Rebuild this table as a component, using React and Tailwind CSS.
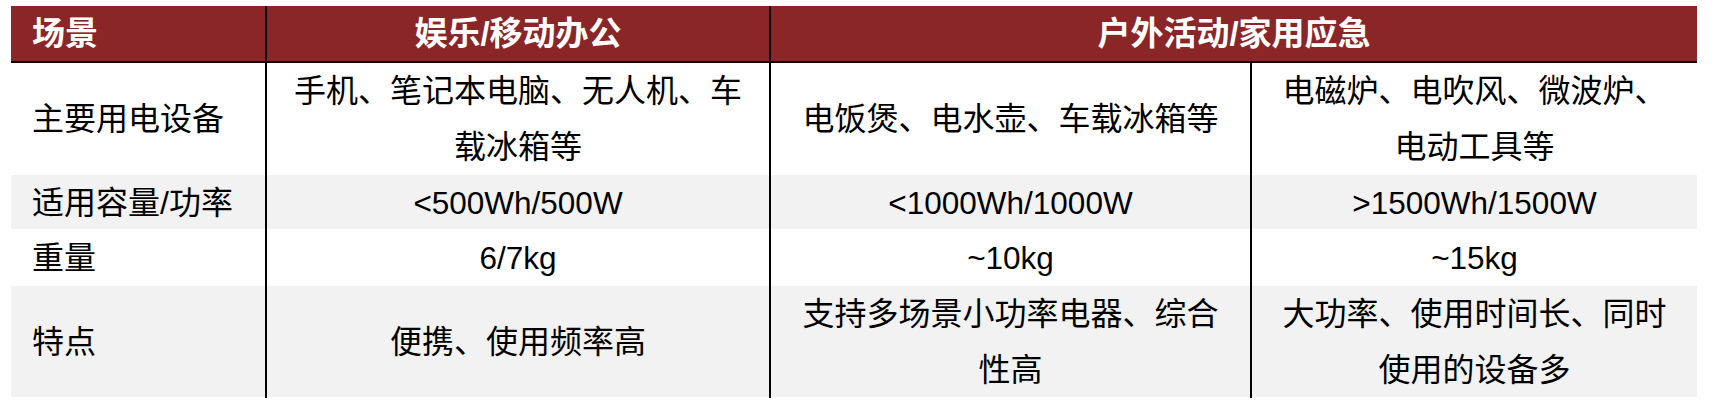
import React from "react";

const cjk = { fontFamily: '"Liberation Sans", "Noto Sans CJK SC", sans-serif' };

const rows = [
  {
    h: "h-[112px]",
    bg: "bg-white",
    latin: false,
    label: "主要用电设备",
    cells: [["手机、笔记本电脑、无人机、车", "载冰箱等"], ["电饭煲、电水壶、车载冰箱等"], ["电磁炉、电吹风、微波炉、", "电动工具等"]],
  },
  {
    h: "h-[54px]",
    bg: "bg-[#f2f2f2]",
    latin: true,
    label: "适用容量/功率",
    cells: [["<500Wh/500W"], ["<1000Wh/1000W"], [">1500Wh/1500W"]],
  },
  {
    h: "h-[57px]",
    bg: "bg-white",
    latin: true,
    label: "重量",
    cells: [["6/7kg"], ["~10kg"], ["~15kg"]],
  },
  {
    h: "h-[111px]",
    bg: "bg-[#f2f2f2]",
    latin: false,
    label: "特点",
    cells: [["便携、使用频率高"], ["支持多场景小功率电器、综合", "性高"], ["大功率、使用时间长、同时", "使用的设备多"]],
  },
];

export default function App() {
  return (
    <div className="w-[1715px] h-[414px] bg-white overflow-hidden" style={cjk}>
      <div className="ml-[11px] mt-[6px] w-[1686px] text-[32px] text-black">
        <div className="grid grid-cols-[254px_504px_928px] h-[57px] bg-[#8a2628] border-b-2 border-black text-white font-bold text-[33px]">
          <div className="flex items-center pl-[21px]">场景</div>
          <div className="flex items-center justify-center border-l-2 border-black">娱乐/移动办公</div>
          <div className="flex items-center justify-center border-l-2 border-black">户外活动/家用应急</div>
        </div>
        {rows.map((r, i) => (
          <div key={i} className={`grid grid-cols-[254px_504px_481px_447px] ${r.h} ${r.bg}`}>
            <div className="flex items-center pl-[21px]">{r.label}</div>
            {r.cells.map((lines, j) => (
              <div
                key={j}
                className={`flex flex-col items-center justify-center border-l-2 border-black leading-[56px] ${r.latin ? "text-[31.5px]" : ""}`}
              >
                {lines.map((t, k) => (
                  <div key={k}>{t}</div>
                ))}
              </div>
            ))}
          </div>
        ))}
      </div>
    </div>
  );
}
